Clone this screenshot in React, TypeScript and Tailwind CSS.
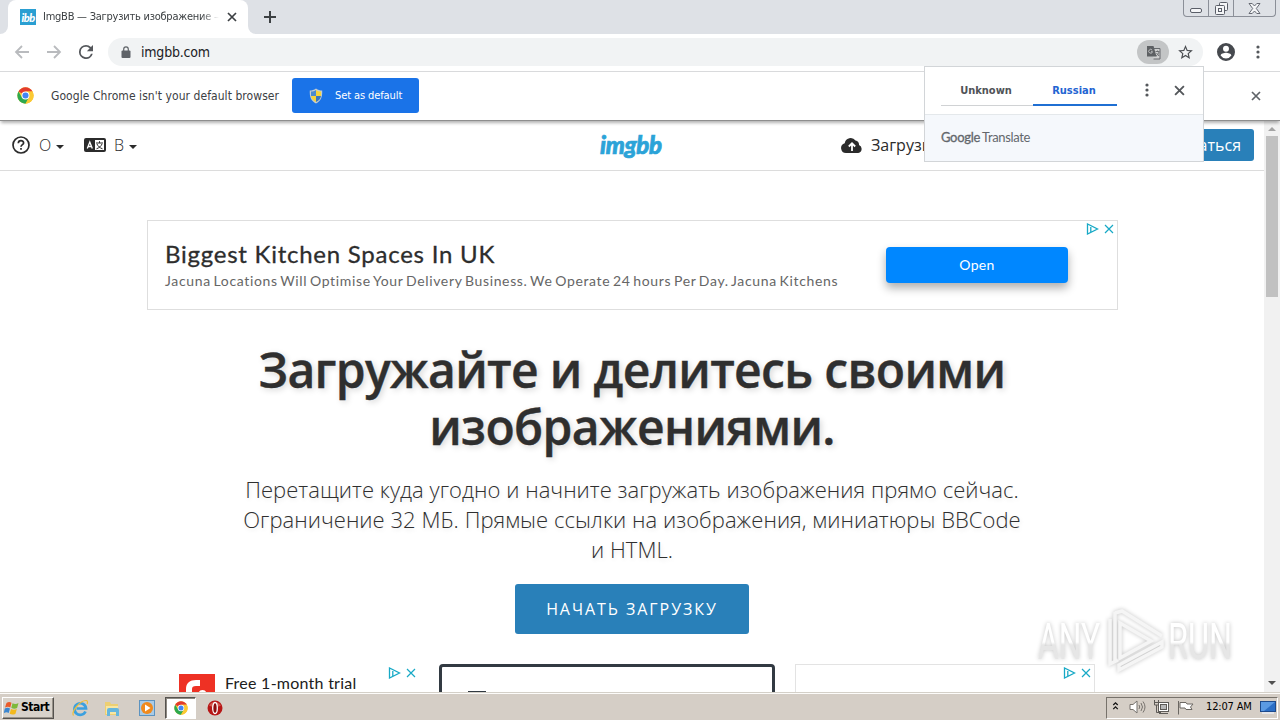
import type { ReactNode } from "react";

const ui = "font-['DejaVu_Sans_Condensed','DejaVu_Sans',sans-serif] [font-stretch:condensed]";

function Cross({ className = "", w = 2 }: { className?: string; w?: number }) {
  return (
    <svg viewBox="0 0 10 10" className={`block ${className}`} fill="none" stroke="currentColor" strokeWidth={w}>
      <path d="M1 1l8 8M9 1l-8 8" />
    </svg>
  );
}

function ChromeLogo({ className = "" }: { className?: string }) {
  return (
    <svg viewBox="0 0 48 48" className={`block shrink-0 ${className}`}>
      <circle cx="24" cy="24" r="23" fill="#fbc934" />
      <path d="M24 24L4.1 12.5A23 23 0 0 1 43.9 12.5H24z" fill="#e33b2e" />
      <path d="M4.1 12.5A23 23 0 0 0 24 47l10-17.5L24 24 14 29.5z" fill="#2da94f" />
      <path d="M43.9 12.5A23 23 0 0 1 24 47l10-17.3a11 11 0 0 0-10-17.2z" fill="#fbc934" />
      <circle cx="24" cy="24" r="11.2" fill="#fff" />
      <circle cx="24" cy="24" r="8.6" fill="#4285f4" />
    </svg>
  );
}

function Dots({ className = "" }: { className?: string }) {
  return (
    <svg viewBox="0 0 4 14" className={`block h-3.5 w-1 fill-[#55585c] ${className}`}>
      <circle cx="2" cy="2" r="1.6" />
      <circle cx="2" cy="7" r="1.6" />
      <circle cx="2" cy="12" r="1.6" />
    </svg>
  );
}

function AdMarks({ className = "" }: { className?: string }) {
  return (
    <div className={`flex items-center gap-[5px] text-[#17a9c6] ${className}`}>
      <svg viewBox="0 0 13 12" className="h-3 w-[13px]" fill="none" stroke="currentColor" strokeWidth="1.3">
        <path d="M1.5 1v10L11.5 6zM4.8 4v5" />
      </svg>
      <Cross className="h-[10px] w-[10px]" w={1.2} />
    </div>
  );
}

function Caret() {
  return <svg viewBox="0 0 8 4" className="h-1 w-2 fill-[#2b2b2b]"><path d="M0 0h8L4 4z" /></svg>;
}

function TabStrip() {
  return (
    <div className="flex h-[34px] shrink-0 bg-[#dee1e6]">
      <div className="flex w-2 shrink-0 items-end bg-white">
        <div className="h-full w-full rounded-br-[8px] bg-[#dee1e6]" />
      </div>
      <div className="flex w-[240px] shrink-0 items-center rounded-t-[8px] bg-white pl-3">
        <div className="flex h-4 w-4 items-center justify-center bg-[#2a9fd2] font-['Lato',sans-serif] text-[11px] font-black italic leading-none tracking-[-0.5px] text-white">ibb</div>
        <div className={`${ui} ml-[7px] w-[176px] overflow-hidden whitespace-nowrap text-[11px] tracking-[-0.24px] text-[#3c4043] [mask-image:linear-gradient(to_right,black_90%,transparent)]`}>
          ImgBB — Загрузить изображение —
        </div>
        <Cross className="ml-2 h-[10px] w-[10px] text-[#3c4043]" w={1.7} />
      </div>
      <div className="flex w-2 shrink-0 bg-white">
        <div className="h-full w-full rounded-bl-[8px] bg-[#dee1e6]" />
      </div>
      <div className="flex flex-1 items-center pl-2">
        <svg viewBox="0 0 12 12" className="h-3 w-3" stroke="#3c4043" strokeWidth="2"><path d="M6 0v12M0 6h12" /></svg>
      </div>
      <div className="mr-1 flex h-[17px] w-[93px] rounded-b-[4px] border border-t-0 border-[#8b8f98] text-[#5a5e68]">
        <div className="flex w-[25px] items-center justify-center border-r border-[#8b8f98] pt-1">
          <svg viewBox="0 0 12 5" className="h-[5px] w-3" fill="#f4f5f7" stroke="currentColor"><rect x=".5" y=".5" width="11" height="4" rx="1.5" /></svg>
        </div>
        <div className="flex w-[25px] items-center justify-center border-r border-[#8b8f98]">
          <svg viewBox="0 0 13 13" className="h-[13px] w-[13px]" fill="#f4f5f7" stroke="currentColor"><rect x="4.5" y=".5" width="8" height="8" rx="1" /><rect x=".5" y="3.5" width="9" height="9" rx="1" /><rect x="3.5" y="6.5" width="3" height="3" /></svg>
        </div>
        <div className="flex flex-1 items-center justify-center">
          <svg viewBox="0 0 13 11" className="h-[11px] w-[13px]" fill="#f4f5f7" stroke="currentColor" strokeWidth=".9"><path d="M1 .5h3.2L6.500 3 8.800.5H12L8.300 5.500 12 10.500H8.800L6.500 8 4.200 10.500H1L4.700 5.500z" /></svg>
        </div>
      </div>
    </div>
  );
}

function Toolbar() {
  return (
    <div className="flex h-[38px] shrink-0 items-center border-b border-[#d9dadc] bg-white pb-px">
      <svg viewBox="0 0 16 14" className="ml-[14px] h-[14px] w-4" fill="none" stroke="#b9bbbe" strokeWidth="1.8"><path d="M15 7H2M8 1L2 7l6 6" /></svg>
      <svg viewBox="0 0 16 14" className="ml-4 h-[14px] w-4" fill="none" stroke="#b9bbbe" strokeWidth="1.8"><path d="M1 7h13M8 1l6 6-6 6" /></svg>
      <svg viewBox="4 4 16 16" className="ml-[17px] h-[14px] w-[14px] fill-[#54575b]"><path d="M17.650 6.350A7.960 7.960 0 0 0 12 4a8 8 0 1 0 7.730 10h-2.080A6 6 0 1 1 12 6c1.660 0 3.140.69 4.220 1.780L13 11h7V4z" /></svg>
      <div className="ml-[15px] flex h-7 w-[1095px] items-center rounded-full bg-[#f1f3f4] pl-3">
        <svg viewBox="0 0 10 12" className="mx-px h-3 w-[10px]"><rect x=".5" y="4.500" width="9" height="7.500" rx="1" fill="#5f6368" /><path d="M2.700 5V3.200a2.300 2.300 0 0 1 4.600 0V5" fill="none" stroke="#5f6368" strokeWidth="1.200" /></svg>
        <span className={`${ui} ml-[9px] w-[980px] text-[14px] tracking-[-0.2px] text-[#202124]`}>imgbb.com</span>
        <div className="ml-[16px] flex h-6 w-8 shrink-0 items-center justify-center rounded-full bg-[#c3c5c6]">
          <svg viewBox="0 0 15 15" className="h-[15px] w-[15px]"><path d="M4.500 3.500h9.500v10.500H7.500" fill="#cfd0d0" stroke="#66696c" /><path d="M1 1h6.500l3 10.500H1z" fill="#5d6063" /><path d="M6.200 5.200a1.900 1.900 0 1 0 .3 1.500H5" fill="none" stroke="#c5c6c7" strokeWidth=".9" /><path d="M9.500 6.500h4M11.500 5.500v1M13 7c-.5 2-2 3.500-3 4M10.500 8l2.500 3" fill="none" stroke="#66696c" strokeWidth=".9" /></svg>
        </div>
        <svg viewBox="2 2 20 19" className="ml-[9px] h-[14px] w-[15px] shrink-0 fill-[#4b4e52]"><path d="M22 9.240l-7.190-.62L12 2 9.190 8.630 2 9.240l5.460 4.730L5.820 21 12 17.270 18.180 21l-1.630-7.030zM12 15.400l-3.760 2.270 1-4.280-3.320-2.880 4.380-.38L12 6.100l1.710 4.040 4.380.38-3.320 2.880 1 4.280z" /></svg>
      </div>
      <svg viewBox="2 2 20 20" className="ml-[14px] h-[18px] w-[18px] fill-[#46494e]"><path d="M12 2a10 10 0 1 0 0 20 10 10 0 0 0 0-20zm0 3a3.300 3.300 0 1 1 0 6.600A3.300 3.300 0 0 1 12 5zm0 14.200a7.200 7.200 0 0 1-6-3.220c.03-2 4-3.080 6-3.080s5.970 1.090 6 3.080a7.200 7.200 0 0 1-6 3.220z" /></svg>
      <Dots className="ml-[21px]" />
    </div>
  );
}

function InfoBar() {
  return (
    <div className="z-10 flex h-[49px] shrink-0 items-center border-b border-[#8e8e8e] bg-white pb-px shadow-[0_3px_3px_-1px_rgba(0,0,0,0.3)]">
      <ChromeLogo className="ml-[17px] h-[17px] w-[17px]" />
      <span className={`${ui} ml-[17px] w-[241px] whitespace-nowrap text-[12px] tracking-[0.06px] text-[#3c4043]`}>Google Chrome isn&apos;t your default browser</span>
      <div className="flex h-[35px] w-[127px] items-center rounded-[3px] bg-[#1a73e8] pl-[17px]">
        <svg viewBox="0 0 14 16" className="h-4 w-[14px]"><path d="M7 .5C5 2 3 2.500.8 2.500.5 9 2 13 7 15.500 12 13 13.500 9 13.200 2.500 11 2.500 9 2 7 .5z" fill="#c3ccd0" /><path d="M7 2C5.500 3 4 3.500 2 3.600V8h5z" fill="#4a8ad0" /><path d="M7 2c1.500 1 3 1.500 5 1.600V8H7z" fill="#f5d33c" /><path d="M2 8h5v6C4 12.500 2.300 10.500 2 8z" fill="#f5d33c" /><path d="M12 8H7v6c3-1.500 4.700-3.500 5-6z" fill="#3a76bd" /></svg>
        <span className={`${ui} ml-3 whitespace-nowrap pt-0.5 text-[11px] tracking-[-0.1px] text-white`}>Set as default</span>
      </div>
      <Cross className="ml-auto mr-[19px] h-[10px] w-[10px] text-[#5f6368]" w={1.7} />
    </div>
  );
}

function SiteHeader() {
  return (
    <div className="flex h-[50px] shrink-0 items-center border-b border-[#dcdcdc] pb-0.5 pl-3 font-['Open_Sans',sans-serif] text-[16px] text-[#2b2b2b]">
      <svg viewBox="0 0 18 18" className="h-[18px] w-[18px]" fill="none" stroke="#2b2b2b" strokeWidth="1.700"><circle cx="9" cy="9" r="8" /><path d="M6.300 7.200c.1-3.400 5.300-3.200 5.300-.3C11.600 8.600 9 8.700 9 10.800M9 12v1.800" /></svg>
      <span className="ml-[9px] w-3 font-light">О</span>
      <span className="ml-[5px] mt-1 flex"><Caret /></span>
      <svg viewBox="0 0 22 14" className="ml-5 h-[14px] w-[22px]"><rect width="22" height="14" rx="2" fill="#2b2b2b" /><rect x="11" y="2" width="9" height="10" fill="#fff" /><path d="M3.300 10.500L5.800 4l2.500 6.500M4.300 8.500h3" stroke="#fff" strokeWidth="1.300" fill="none" /><path d="M12 5h7M15.500 3.200V5M13 6c.7 2 3 4 5.500 4.800M18 6c-.7 2-3 4-5.500 4.800" stroke="#2b2b2b" fill="none" /></svg>
      <span className="ml-2 w-[10px] font-light">В</span>
      <span className="ml-[5px] mt-1 flex"><Caret /></span>
      <span className="ml-[463px] w-[66px] font-['Lato',sans-serif] text-[24px] font-black italic leading-none tracking-[-0.35px] text-[#2ba3d8] [-webkit-text-stroke:0.7px]">imgbb</span>
      <svg viewBox="0 0 22 16" className="ml-[175px] h-4 w-[22px]"><path d="M5 16a5 5 0 0 1-1.300-9.800A6 6 0 0 1 14.500 3.500 4 4 0 0 1 18 8a4.200 4.200 0 0 1-.7 8z" fill="#2b2b2b" /><path d="M11 14V7M7.800 9.500L11 6.300l3.200 3.200" fill="none" stroke="#fff" strokeWidth="1.800" /></svg>
      <span className="ml-2 w-[90px] whitespace-nowrap">Загрузить</span>
      <div className="ml-auto mr-[10px] flex h-8 w-[168px] items-center justify-end whitespace-nowrap rounded-[3px] bg-[#2980b9] pr-[13px] text-white">Зарегистрироваться</div>
    </div>
  );
}

function BannerAd() {
  return (
    <div className="ml-[147px] mt-[49px] flex h-[90px] w-[971px] shrink-0 border border-[#dedede] font-['Lato',sans-serif]">
      <div className="ml-[17px] mt-[19px] flex w-[721px] flex-col whitespace-nowrap">
        <div className="text-[24px] leading-7 tracking-[0.75px] text-[#2d2d2d] [-webkit-text-stroke:0.3px]">Biggest Kitchen Spaces In UK</div>
        <div className="mt-1 text-[14px] leading-[18px] tracking-[0.65px] text-[#666] [word-spacing:-1.5px]">Jacuna Locations Will Optimise Your Delivery Business. We Operate 24 hours Per Day. Jacuna Kitchens</div>
      </div>
      <div className="mt-[26px] flex h-9 w-[182px] items-center justify-center rounded-[4px] bg-[#0087ff] pb-px text-[14px] tracking-[0.3px] text-white shadow-[0_5px_10px_rgba(0,0,0,0.32)]">Open</div>
      <AdMarks className="ml-[18px] mt-[2px] h-3" />
    </div>
  );
}

function Hero() {
  return (
    <div className="flex shrink-0 flex-col items-center font-['Open_Sans',sans-serif] text-[#2f2f2f]">
      <h1 className="mt-[31px] whitespace-nowrap text-center text-[48px] font-semibold leading-[57px] tracking-[-0.65px] [-webkit-text-stroke:0.4px] [text-shadow:2px_2px_6px_rgba(0,0,0,0.17)]">Загружайте и делитесь своими<br />изображениями.</h1>
      <p className="mt-[19px] whitespace-nowrap text-center text-[22px] font-light leading-[30px] tracking-[0.04px] [text-shadow:1px_2px_4px_rgba(0,0,0,0.1)]">Перетащите куда угодно и начните загружать изображения прямо сейчас.<br />Ограничение 32 МБ. Прямые ссылки на изображения, миниатюры BBCode<br />и HTML.</p>
      <div className="mt-5 flex h-[50px] w-[234px] items-center justify-center rounded-[3px] bg-[#2980b9] text-[16px] tracking-[1.95px] text-white">НАЧАТЬ ЗАГРУЗКУ</div>
    </div>
  );
}

function Cards() {
  return (
    <div className="mt-[30px] flex h-[28px] shrink-0 overflow-hidden">
      <div className="ml-[179px] flex w-[260px]">
        <div className="mt-[10px] h-9 w-9 shrink-0 bg-[#ee3124]">
          <svg viewBox="0 0 36 36" className="h-9 w-9"><path d="M7 24v-9c0-6 4-9 10-9h4v6h-4c-3 0-4 1-4 3v9z" fill="#fff" /><circle cx="23.500" cy="20" r="4" fill="#fff" /></svg>
        </div>
        <div className="ml-[10px] mt-[9px] w-[160px] whitespace-nowrap font-['Lato',sans-serif] text-[16px] leading-5 tracking-[0.25px] text-[#202020]">Free 1-month trial</div>
        <AdMarks className="ml-[3px] mt-[3px] h-3" />
      </div>
      <div className="h-[60px] w-[336px] rounded-[4px] border-[3px] border-[#323a42] pl-[26px] pt-6"><div className="h-1 w-[18px] bg-[#323a42]" /></div>
      <div className="ml-5 flex h-[60px] w-[300px] justify-end border border-[#e3e3e3]"><AdMarks className="mr-[3px] mt-[2px] h-3" /></div>
    </div>
  );
}

function ScrollBar() {
  return (
    <div className="flex w-4 shrink-0 flex-col items-center bg-[#f1f1f1]">
      <svg viewBox="0 0 8 4" className="mt-[6px] h-1 w-2 fill-[#a3a3a3]"><path d="M0 4h8L4 0z" /></svg>
      <div className="mt-[5px] h-[161px] w-3 bg-[#c1c1c1]" />
      <svg viewBox="0 0 8 4" className="mb-[7px] mt-auto h-1 w-2 fill-[#505050]"><path d="M0 0h8L4 4z" /></svg>
    </div>
  );
}

function TaskItem({ children }: { children: ReactNode }) {
  return <div className="flex h-6 w-[34px] shrink-0 items-center justify-center">{children}</div>;
}

function TaskBar() {
  return (
    <div className="flex h-[28px] shrink-0 items-center bg-[#d5cec6] pt-[3px] shadow-[inset_0_1px_0_#d4d0c8,inset_0_2px_0_#fdfcfa]">
      <div className={`${ui} ml-[2px] flex h-[22px] w-[52px] items-center border border-b-[#55524e] border-l-white border-r-[#55524e] border-t-white bg-[#d8d2ca] pl-px text-[12px] font-bold tracking-[-0.5px] text-black shadow-[inset_-1px_-1px_0_#989289]`}>
        <svg viewBox="0 0 16 16" className="mr-px h-4 w-4 shrink-0"><path d="M2.500 3C4.500 1.500 6 1.800 7.500 2.800L6.300 7.500C4.800 6.500 3 6.500 1 7.600z" fill="#ea5b2a" /><path d="M8.500 3.200c2 1 4 1 6-.2l-1.400 5c-2 1-3.800 1-5.800-.2z" fill="#7db93a" /><path d="M.8 8.600c2-1.100 3.600-1 5.200-.1L4.700 13C3.300 12 1.700 12-.2 13z" fill="#3b86d0" /><path d="M7 8.900c2 1.100 3.900 1 5.800.1L11.500 13.700c-2 1.200-4 1-5.800 0z" fill="#f3b91c" /></svg>
        <span className="pb-0.5">Start</span>
      </div>
      <div className="ml-[9px] flex items-center">
        <TaskItem><svg viewBox="0 0 18 18" className="h-[18px] w-[18px]" fill="none"><path d="M14.500 12.500A5.800 5.800 0 1 1 15 9.500H5.500" stroke="#3ba0df" strokeWidth="2.700" /><path d="M2.500 16.500C0 13 9 1 15.500 1.500c1.500.5 1 3 .5 3.500" stroke="#edbd39" strokeWidth="1.200" /></svg></TaskItem>
        <TaskItem><svg viewBox="0 0 18 18" className="-ml-1 h-[18px] w-[18px]"><path d="M2 3h5l1 2h7v11H2z" fill="#edcf72" /><path d="M3 7h12v8H3z" fill="#f8e6a2" /><path d="M4 17v-6q0-2 2-2h8q2 0 2 2v6h-3v-4H7v4z" fill="#66b6dd" /></svg></TaskItem>
        <TaskItem><svg viewBox="0 0 18 18" className="-ml-[3px] h-[18px] w-[18px]"><rect x="1.500" y="1.500" width="15" height="15" fill="#a9cbe6" stroke="#5c93c0" /><circle cx="9" cy="9" r="6" fill="#f08a1d" /><path d="M7 5.500v7L12.500 9z" fill="#fff" /></svg></TaskItem>
        <div className="flex h-[22px] w-[31px] items-center justify-center border border-b-white border-l-[#55524e] border-r-white border-t-[#55524e] bg-white shadow-[inset_1px_1px_0_#8d8881]"><ChromeLogo className="h-[14px] w-[14px]" /></div>
        <TaskItem><svg viewBox="0 0 16 16" className="ml-[3px] h-4 w-4"><circle cx="8" cy="8" r="7.500" fill="#b71616" /><path d="M2 5.500a7 7 0 0 1 12 0q-6 3-12 0z" fill="#d5564c" /><ellipse cx="8" cy="8" rx="2.300" ry="5.500" fill="#8c0c0c" stroke="#fff" strokeWidth="1.300" /></svg></TaskItem>
      </div>
      <div className={`${ui} ml-auto mr-[2px] flex h-[22px] w-[172px] items-center border border-b-white border-l-[#77726b] border-r-white border-t-[#77726b] text-[11px] text-black`}>
        <svg viewBox="0 0 7 10" className="mb-1 ml-[5px] h-[9px] w-[7px]" fill="none" stroke="#111" strokeWidth="1.400"><path d="M1 4.500L3.500 2 6 4.500M1 9l2.500-2.500L6 9" /></svg>
        <svg viewBox="0 0 17 14" className="mb-px ml-[10px] h-[14px] w-[17px]" fill="none" stroke="#77736e"><path d="M1 4.500h3L8 1v12L4 9.500H1z" fill="#fff" /><path d="M10 5q1.500 2 0 4M12 3q3 4 0 8M14 1.500q4 5.500 0 11" /></svg>
        <svg viewBox="0 0 17 16" className="mb-px ml-[7px] h-4 w-[17px]" fill="none" stroke="#5e5b57"><rect x="5.500" y="3.500" width="10" height="9" fill="#fff" /><rect x="7.500" y="5.500" width="6" height="5" fill="#b8b8b8" /><path d="M6 14.500h9M1.500 1v5h4V1M3.500 6v7.500H8" fill="none" /><path d="M1 3.500h5" /></svg>
        <svg viewBox="0 0 17 15" className="mb-px ml-[7px] h-[15px] w-[17px]" fill="#fff" stroke="#6b6762"><path d="M1.500 1v13.500M3 2.500h6l1 1.500h6l-2.500 3L15 9.500H9L8 8H3z" /></svg>
        <span className="ml-[12px] w-[48px] whitespace-nowrap tracking-[-0.15px]">12:07 AM</span>
        <svg viewBox="0 0 16 13" className="mb-px ml-[6px] h-[13px] w-4"><rect x=".5" y=".5" width="15" height="10" fill="#2c6fc6" stroke="#1d4a8c" /><path d="M1 1h14L4 10H1z" fill="#5b9ae3" /><path d="M2 12h12" stroke="#e8edf4" strokeWidth="1.500" /></svg>
      </div>
    </div>
  );
}

function TranslatePopup() {
  return (
    <div className="absolute left-[924px] top-[66px] z-20 flex h-24 w-[280px] flex-col border border-[#d2d5d8] bg-white">
      <div className={`${ui} flex h-[48px] items-start border-b border-[#e4e8eb] pl-4 text-[11px] font-bold`}>
        <div className="flex h-[39px] w-[92px] items-center justify-center border-b border-[#d0d2d4] pr-0.5 pt-[10px] text-[#505357]">Unknown</div>
        <div className="flex h-[39px] w-[84px] items-center justify-center border-b-2 border-[#1f6fd3] pr-0.5 pt-[11px] text-[#2364d2]">Russian</div>
        <Dots className="ml-[28px] mt-4" />
        <Cross className="ml-[25px] mt-[18px] h-[11px] w-[11px] text-[#54575b]" w={1.700} />
      </div>
      <div className="flex flex-1 items-center bg-[#f5f8fc] pl-4 font-['Lato',sans-serif] text-[13px] text-[#63676c]">
        <span className="tracking-[-0.3px] [-webkit-text-stroke:0.3px]">Google</span>
        <span className="ml-[2px] tracking-[-0.35px]">Translate</span>
      </div>
    </div>
  );
}

function Watermark() {
  return (
    <svg viewBox="0 0 210 80" className="absolute left-[1030px] top-[600px] z-30 h-20 w-[210px] [filter:drop-shadow(0_0_2px_rgba(0,0,0,0.24))]">
      <defs>
        <linearGradient id="fade" x1="0" y1="0" x2="0" y2="1">
          <stop offset=".5" stopColor="#fff" />
          <stop offset=".55" stopColor="#e6e6e6" />
        </linearGradient>
      </defs>
      <g fill="url(#fade)" className="font-['Roboto',sans-serif] text-[50px]">
        <text x="8" y="59" textLength="62" lengthAdjust="spacingAndGlyphs">ANY</text>
        <text x="138" y="59" textLength="64" lengthAdjust="spacingAndGlyphs">RUN</text>
      </g>
      <g fill="none" stroke="#fff" strokeWidth="3.500">
        <path d="M80 19v45l8-4M85 17v44M90 23v35l31-17zM85 13l7-2 40 25M85 12v5M89 70l43-23v-5L89 65z" stroke="#f5f5f5" />
      </g>
    </svg>
  );
}

export default function App() {
  return (
    <div className="relative flex h-[720px] w-[1280px] flex-col overflow-hidden bg-white">
      <TabStrip />
      <Toolbar />
      <InfoBar />
      <div className="flex h-[571px] shrink-0">
        <div className="flex w-[1264px] shrink-0 flex-col overflow-hidden bg-white">
          <SiteHeader />
          <BannerAd />
          <Hero />
          <Cards />
        </div>
        <ScrollBar />
      </div>
      <TaskBar />
      <TranslatePopup />
      <Watermark />
    </div>
  );
}
